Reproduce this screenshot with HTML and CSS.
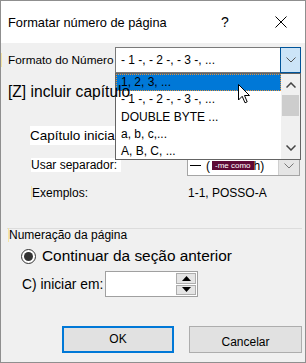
FILE: index.html
```html
<!DOCTYPE html>
<html lang="pt">
  <head>
    <meta charset="UTF-8" />
    <title>Formatar número de página</title>
    <link rel="stylesheet" href="styles.css">
  </head>
  <body>
    <div class="dialog">
      <div class="titlebar">
        <span class="title">Formatar número de página</span>
        <span class="help">?</span>
        <svg class="close" width="12" height="12" viewBox="0 0 12 12">
          <path d="M0.5 0.5 L11.5 11.5 M11.5 0.5 L0.5 11.5" stroke="#000" stroke-width="1" fill="none" />
        </svg>
      </div>

      <div class="content">
        <div class="row format-row">
          <span class="label mark">Formato do Número</span>
          <div class="combo">
            <span class="combo-text">- 1 -, - 2 -, - 3 -, ...</span>
            <span class="combo-btn active">
              <svg width="10" height="6" viewBox="0 0 10 6"><path d="M0.5 0.5 L5 5 L9.5 0.5" stroke="#555" fill="none" /></svg>
            </span>
            <div class="list">
              <div class="items">
                <div class="item selected">1, 2, 3, ...</div>
                <div class="item">- 1 -, - 2 -, - 3 -, ...</div>
                <div class="item">DOUBLE BYTE ...</div>
                <div class="item">a, b, c,...</div>
                <div class="item">A, B, C, ...</div>
              </div>
              <div class="scrollbar">
                <svg class="arrow" width="10" height="6" viewBox="0 0 10 6"><path d="M0.5 5.5 L5 1 L9.5 5.5" stroke="#444" stroke-width="1.5" fill="none" /></svg>
                <div class="thumb"></div>
                <svg class="arrow down" width="10" height="6" viewBox="0 0 10 6"><path d="M0.5 0.5 L5 5 L9.5 0.5" stroke="#444" stroke-width="1.5" fill="none" /></svg>
              </div>
            </div>
            <svg class="cursor" width="13" height="20" viewBox="0 0 13 20">
              <path d="M0.5 0.5 L0.5 16 L4.2 12.3 L7 18.8 L9.2 17.8 L6.5 11.5 L11.5 11.5 Z" fill="#fff" stroke="#000" stroke-width="1" />
            </svg>
          </div>
        </div>

        <div class="row chapter-row">
          <span class="big">[Z] incluir capítulo</span>
        </div>

        <div class="row start-style">
          <span class="hl">Capítulo inicia</span>
        </div>

        <div class="row sep-row">
          <span class="sub-label"><span class="hl small">Usar separador:</span></span>
          <div class="sep-combo">
            <span class="dash"></span>
            <span class="paren">(</span>
            <span class="tag">-me como</span>
            <span class="paren">h)</span>
            <span class="combo-btn plain">
              <svg width="10" height="6" viewBox="0 0 10 6"><path d="M0.5 0.5 L5 5 L9.5 0.5" stroke="#777" fill="none" /></svg>
            </span>
          </div>
        </div>

        <div class="row example-row">
          <span class="sub-label"><span class="mark">Exemplos:</span></span>
          <span class="example">1-1, POSSO-A</span>
        </div>

        <div class="group-head">
          <span class="mark">Numeração da página</span>
        </div>

        <div class="row radio-row">
          <span class="radio"><span class="dot"></span></span>
          <span class="radio-text">Continuar da seção anterior</span>
        </div>

        <div class="row start-row">
          <span class="start-label">C) iniciar em:</span>
          <div class="spin">
            <div class="spin-btns">
              <span class="spin-btn"><svg width="9" height="5" viewBox="0 0 9 5"><path d="M0 5 L4.5 0 L9 5 Z" fill="#000" /></svg></span>
              <span class="spin-btn"><svg width="9" height="5" viewBox="0 0 9 5"><path d="M0 0 L4.5 5 L9 0 Z" fill="#000" /></svg></span>
            </div>
          </div>
        </div>

        <div class="buttons">
          <button class="btn default">OK</button>
          <button class="btn cancel">Cancelar</button>
        </div>
      </div>
    </div>
  </body>
</html>
```

FILE: styles.css
```css
* {
  margin: 0;
  padding: 0;
  box-sizing: border-box;
}
body {
  background: #f0f0f0;
  font-family: "Liberation Sans", Arial, sans-serif;
  color: #000;
}
.dialog {
  width: 306px;
  height: 363px;
  border: 1px solid #8f8f8f;
  background: #f0f0f0;
  display: flex;
  flex-direction: column;
}
.titlebar {
  height: 42px;
  background: #fff;
  display: flex;
  align-items: center;
  padding-left: 7px;
  flex-shrink: 0;
}
.title {
  font-size: 12.8px;
  width: 213px;
}
.help {
  font-size: 14px;
  width: 54px;
}
.close {
  display: block;
}
.content {
  display: flex;
  flex-direction: column;
}
.row {
  display: flex;
  align-items: center;
}
.label {
  font-size: 11.8px;
  padding-left: 6px;
  width: 114px;
}
.mark {
  border-left: 1px solid #f3e4a6;
}
.format-row {
  margin-top: 4px;
  height: 26px;
}
.combo {
  position: relative;
  width: 186px;
  height: 26px;
  background: #fff;
  border: 1px solid #7a7a7a;
  display: flex;
  align-items: center;
  font-size: 12px;
}
.combo-text {
  flex: 1;
  padding-left: 5px;
}
.combo-btn {
  width: 21px;
  height: 100%;
  display: flex;
  align-items: center;
  justify-content: center;
}
.combo-btn.active {
  background: #cce4f7;
  border: 1px solid #005499;
  margin-right: -1px;
  height: 26px;
  margin-top: -1px;
  align-self: flex-start;
}
.combo-btn.plain {
  background: #e5e5e5;
  border-left: 1px solid #cfcfcf;
  margin-left: auto;
}
.list {
  position: absolute;
  top: 25px;
  left: -1px;
  width: 186px;
  height: 87px;
  background: #fff;
  border: 1px solid #646464;
  display: flex;
  z-index: 2;
}
.items {
  flex: 1;
}
.item {
  height: 17.3px;
  line-height: 17.3px;
  padding-left: 5px;
  font-size: 12px;
  white-space: nowrap;
}
.item.selected {
  background: #0078d7;
  outline: 1px dotted #e3923c;
  outline-offset: -1px;
}
.scrollbar {
  width: 19px;
  background: #f0f0f0;
  display: flex;
  flex-direction: column;
  align-items: center;
}
.arrow {
  margin-top: 8px;
}
.arrow.down {
  margin-top: auto;
  margin-bottom: 8px;
}
.thumb {
  width: 17px;
  height: 21px;
  background: #cdcdcd;
  margin-top: 7px;
}
.cursor {
  position: absolute;
  left: 122px;
  top: 36px;
  z-index: 4;
}
.chapter-row {
  margin-top: 9px;
  height: 20px;
  padding-left: 7px;
  position: relative;
  z-index: 3;
}
.big {
  font-size: 15.6px;
}
.start-style {
  margin-top: 24px;
  height: 19px;
  padding-left: 29px;
  white-space: nowrap;
}
.hl {
  background: #fff;
  font-size: 13.5px;
  line-height: 19px;
}
.hl.small {
  font-size: 12px;
  line-height: 17px;
  padding-right: 4px;
}
.sep-row {
  margin-top: 10px;
  height: 21px;
}
.sub-label {
  width: 186px;
  padding-left: 30px;
  font-size: 12px;
}
.sep-combo {
  width: 113px;
  height: 21px;
  background: #fff;
  border: 1px solid #a5a5a5;
  display: flex;
  align-items: center;
  font-size: 12px;
}
.dash {
  width: 11px;
  height: 1px;
  background: #000;
  margin-left: 2px;
  margin-right: 5px;
}
.tag {
  background: #5e0a36;
  color: #fff;
  font-size: 8px;
  height: 9px;
  line-height: 9px;
  padding: 0 3px 0 3px;
  margin-left: 2px;
}
.example-row {
  margin-top: 8px;
  height: 18px;
}
.example {
  font-size: 12px;
  padding-left: 1px;
}
.group-head {
  margin: 26px 3px 0 6px;
  border-top: 1px solid #dcdcdc;
  font-size: 12px;
  line-height: 13px;
  padding-left: 1px;
}
.radio-row {
  margin-top: 4px;
  height: 20px;
  padding-left: 20px;
}
.radio {
  width: 15px;
  height: 15px;
  border: 1px solid #333;
  border-radius: 50%;
  background: #fff;
  display: flex;
  align-items: center;
  justify-content: center;
}
.dot {
  width: 9px;
  height: 9px;
  border-radius: 50%;
  background: #333;
}
.radio-text {
  font-size: 15.4px;
  margin-left: 6px;
}
.start-row {
  margin-top: 5px;
  height: 26px;
  padding-left: 21px;
}
.start-label {
  font-size: 13.8px;
  width: 83px;
}
.spin {
  width: 93px;
  height: 26px;
  border: 1px solid #a0a0a0;
  background: #fff;
  display: flex;
  justify-content: flex-end;
  padding: 1px;
}
.spin-btns {
  width: 20px;
  display: flex;
  flex-direction: column;
  gap: 1px;
}
.spin-btn {
  flex: 1;
  background: #e5e5e5;
  border: 1px solid #adadad;
  display: flex;
  align-items: center;
  justify-content: center;
}
.buttons {
  margin-top: 29px;
  display: flex;
  padding-left: 61px;
  gap: 15px;
}
.btn {
  height: 27px;
  background: #e1e1e1;
  font-family: "Liberation Sans", Arial, sans-serif;
  font-size: 12px;
  color: #000;
}
.btn.default {
  width: 112px;
  border: 2px solid #0078d7;
  padding-bottom: 1px;
}
.btn.cancel {
  width: 113px;
  border: 1px solid #adadad;
  padding-top: 5px;
}
```
